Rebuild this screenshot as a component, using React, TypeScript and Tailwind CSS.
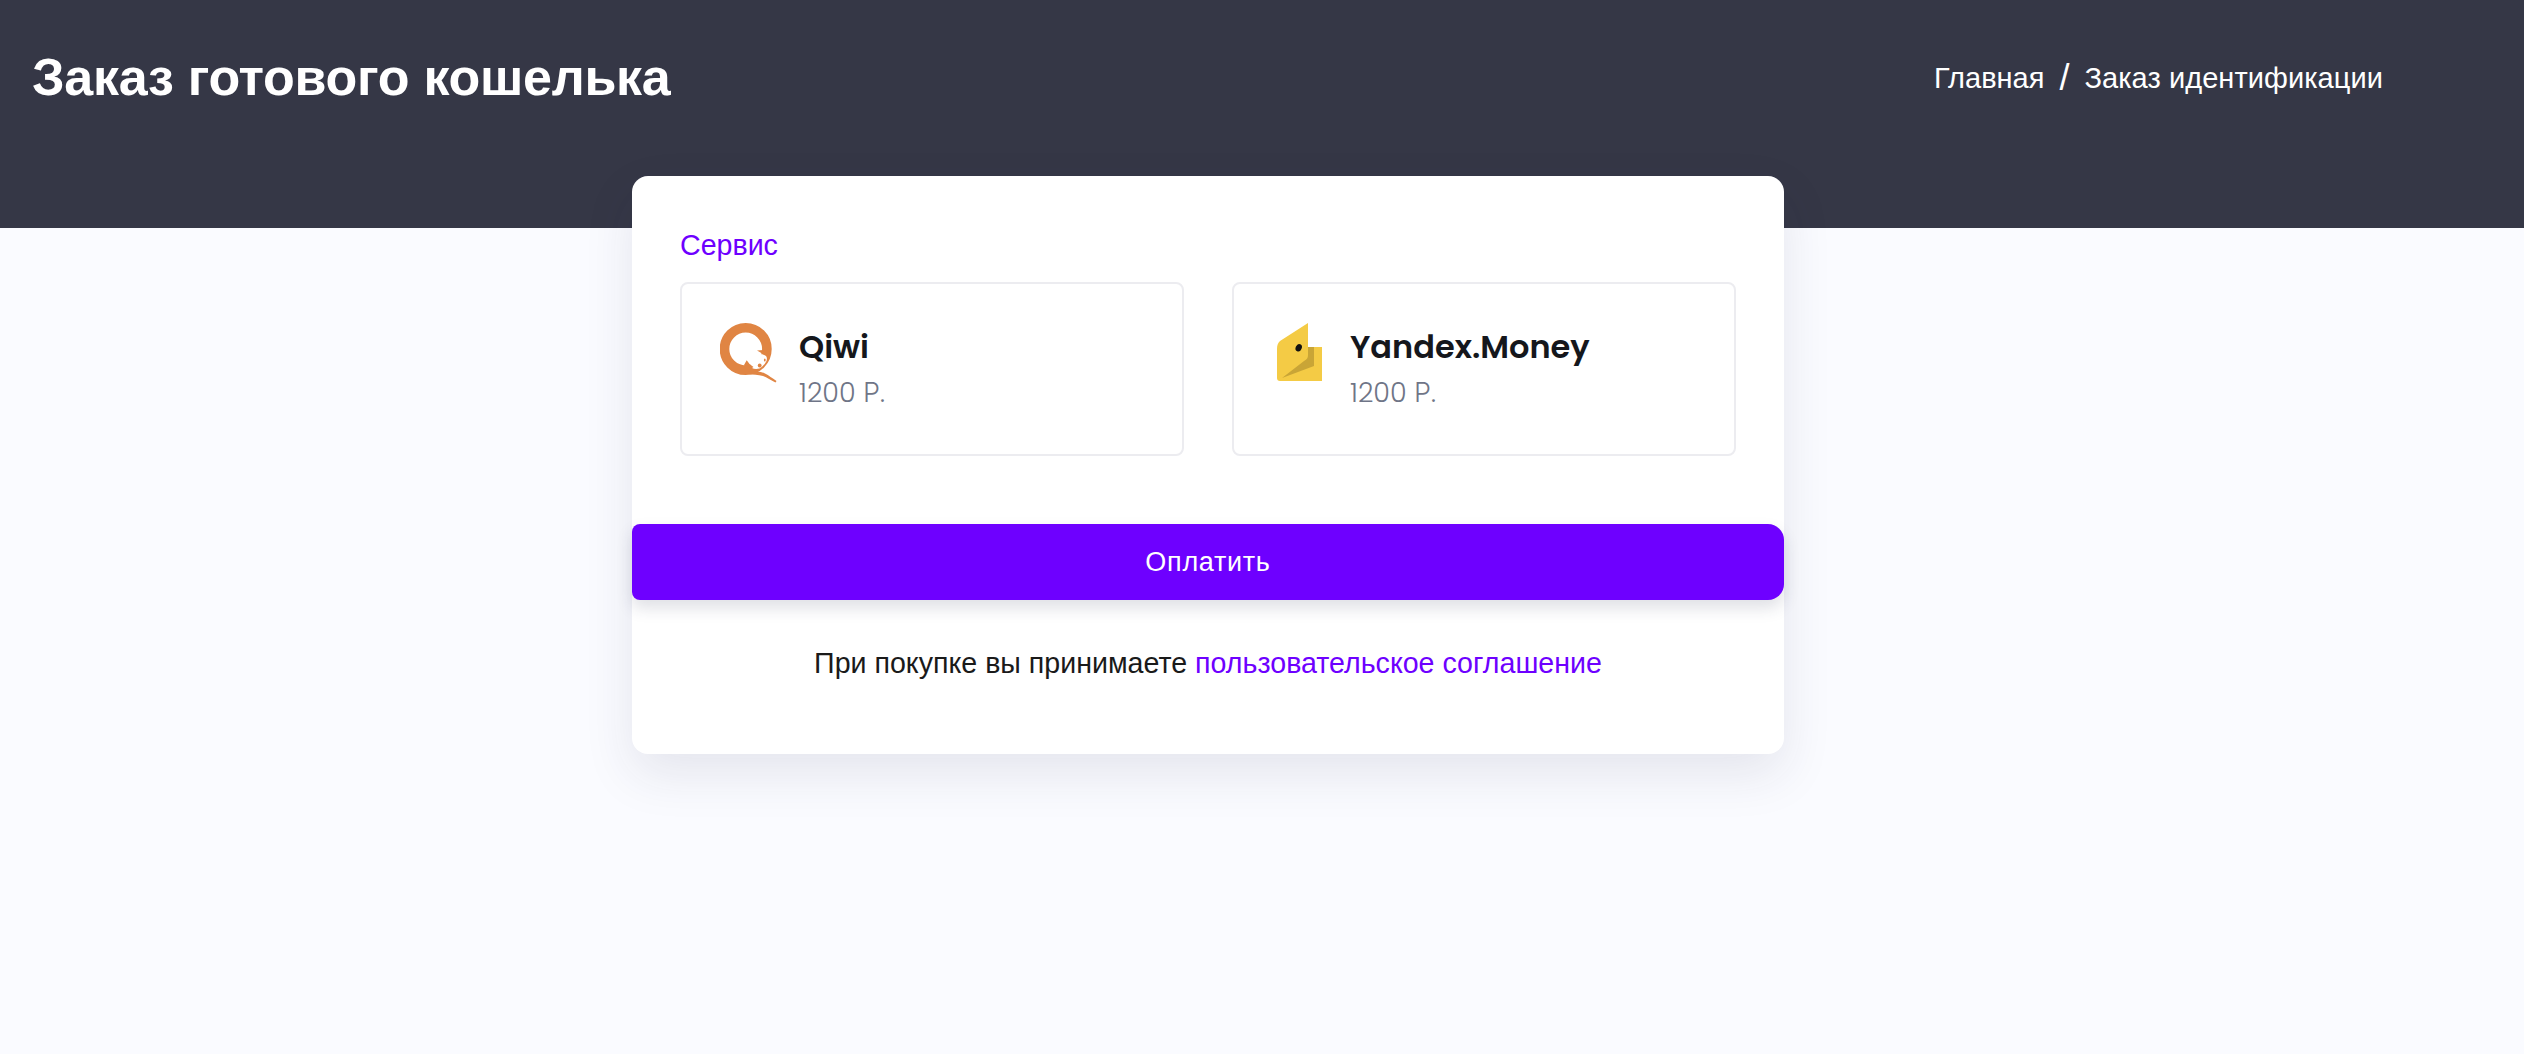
import React from "react";

function QiwiIcon() {
  return (
    <svg width="58" height="60" viewBox="0 0 58 60" className="shrink-0">
      <circle cx="25.700" cy="26" r="21.200" fill="none" stroke="#e08543" strokeWidth="9.600" />
      <path fill="#fff" d="M40 31 Q44 31 46 33 Q47.500 35 46.500 38 Q44.500 42.500 39.500 45.500 Q35 46.500 32 45 L30 41 z" />
      <path fill="#e08543" d="M37 27.500 L43.500 27 L43.500 31.200 z" />
      <path fill="#e08543" d="M26.700 37.300 Q29 41.500 33.500 44 Q30 47 26 46.500 L24 42 z" />
      <circle cx="39.700" cy="42.500" r="1.900" fill="#e08543" />
      <ellipse cx="44.800" cy="37" rx="0.900" ry="1.500" fill="#e08543" />
      <path fill="#e08543" d="M28 48 C35 49 41 48 45 50.500 C49 52.500 52 55 56.500 58 L55.500 59.500 C51 57 47 54.500 43 53 C38 51.500 33 52 28 51 z" />
    </svg>
  );
}

function YandexIcon() {
  return (
    <svg width="45" height="60" viewBox="0 0 45 60" className="shrink-0">
      <path fill="#f4cb45" d="M31 0V24H45V58H3A3 3 0 0 1 0 55V26C0 22 1 20 3 18z" />
      <path fill="#c9a536" d="M31 24H37V43L5 55L27 38C30 36 31 35 31 32z" />
      <ellipse cx="21.700" cy="24.700" rx="3" ry="3.800" transform="rotate(25 21.700 24.700)" fill="#111" />
    </svg>
  );
}

function Service({ icon, name, inset }: { icon: React.ReactNode; name: string; inset: string }) {
  return (
    <div className="h-[174px] w-[504px] rounded-lg border-2 border-[#ececf0] bg-white">
      <div className={`flex items-start pt-[39px] ${inset}`}>
        {icon}
        <div className="pt-[1px]">
          <div className="font-['Poppins','Inter',sans-serif] text-[32px] font-semibold leading-[46px] text-[#15171c]">{name}</div>
          <div className="font-['Poppins','Inter',sans-serif] text-[27px] font-light leading-[46px] text-[#6f7587]">1200 Р.</div>
        </div>
      </div>
    </div>
  );
}

export default function App() {
  return (
    <div className="min-h-[1054px] bg-[#fafbff] font-['Liberation_Sans',sans-serif]">
      <header className="flex h-[228px] items-start justify-between bg-[#353746] pt-[45px] pr-[141px] pl-[32px] text-white">
        <h1 className="text-[52px] font-bold leading-[64px] tracking-[-0.28px]">Заказ готового кошелька</h1>
        <nav className="flex items-center pt-[10px] text-[29px] leading-[46px]">
          <span>Главная</span>
          <span className="mx-[15px] text-[36px] font-light">/</span>
          <span className="tracking-[0.06px]">Заказ идентификации</span>
        </nav>
      </header>
      <main className="-mt-[52px] ml-[632px] h-[578px] w-[1152px] rounded-2xl bg-white pt-[51px] shadow-[0_20px_50px_rgba(40,44,80,0.1)]">
        <div className="px-[48px] text-[28.6px] leading-[36px] text-[#6e00ff]">Сервис</div>
        <div className="mt-[19px] flex gap-[48px] px-[48px]">
          <Service icon={<QiwiIcon />} name="Qiwi" inset="gap-[21px] pl-[38px]" />
          <Service icon={<YandexIcon />} name="Yandex.Money" inset="gap-[28px] pl-[43px]" />
        </div>
        <button className="mt-[68px] block h-[76px] w-full rounded-l-lg rounded-r-2xl bg-[#6e00ff] text-[27px] tracking-[0.7px] text-white shadow-[0_8px_16px_rgba(40,44,80,0.15)]">
          Оплатить
        </button>
        <p className="mt-[45px] text-center text-[28.6px] leading-[36px] text-[#1a1a1a]">
          При покупке вы принимаете <a className="text-[#6e00ff]">пользовательское соглашение</a>
        </p>
      </main>
    </div>
  );
}
